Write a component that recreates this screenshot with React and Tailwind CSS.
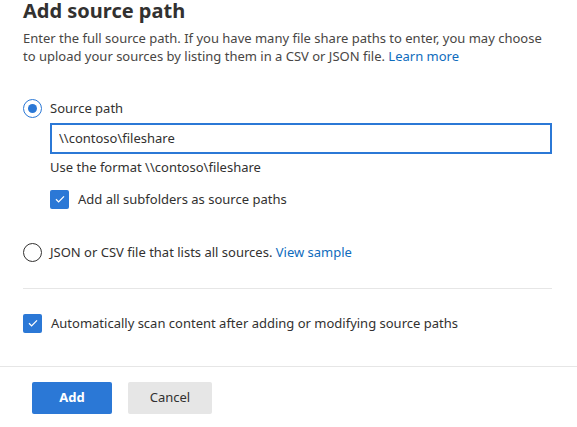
import React, { useState } from 'react';

const font = { fontFamily: '"Noto Sans", "Open Sans", sans-serif' };

const CheckBox = ({ checked, onChange }) => (
  <button
    type="button"
    onClick={onChange}
    className={`w-[19px] h-[19px] rounded-[2px] flex items-center justify-center shrink-0 ${
      checked ? 'bg-[#2b78d6]' : 'border border-[#323130] bg-white'
    }`}
  >
    {checked && (
      <svg width="12" height="12" viewBox="0 0 12 12" fill="none">
        <path d="M2 6.3l2.6 2.6L10 3.4" stroke="white" strokeWidth="1.3" />
      </svg>
    )}
  </button>
);

const Radio = ({ checked, onChange }) => (
  <button
    type="button"
    onClick={onChange}
    className={`w-[19px] h-[19px] rounded-full border-[1.5px] flex items-center justify-center shrink-0 bg-white ${
      checked ? 'border-[#2b78d6]' : 'border-[#323130]'
    }`}
  >
    {checked && <span className="w-[9px] h-[9px] rounded-full bg-[#2b78d6]" />}
  </button>
);

export default function App() {
  const [mode, setMode] = useState('path');
  const [path, setPath] = useState('\\\\contoso\\fileshare');
  const [subfolders, setSubfolders] = useState(true);
  const [autoScan, setAutoScan] = useState(true);

  return (
    <div className="w-[577px] h-[427px] bg-white text-[#323130] overflow-hidden" style={font}>
      {/* Body */}
      <div className="pl-[23px] pr-[25px]">
        <h2 className="text-[20px] font-bold leading-[22px]">Add source path</h2>
        <p className="text-[13px] leading-[18px] mt-[7px] text-[#484644]">
          Enter the full source path. If you have many file share paths to enter, you may choose
          to upload your sources by listing them in a CSV or JSON file.{' '}
          <a className="text-[#0f6cbd]">Learn more</a>
        </p>

        {/* Source path option */}
        <div className="mt-[34px]">
          <label className="flex items-center gap-[8px] text-[13px]">
            <Radio checked={mode === 'path'} onChange={() => setMode('path')} />
            <span>Source path</span>
          </label>
          <div className="pl-[27px] mt-[4px]">
            <input
              autoFocus
              value={path}
              onChange={(e) => setPath(e.target.value)}
              className="w-full h-[31px] border-2 border-[#2b78d6] px-[7px] text-[13px] outline-none"
              style={font}
            />
            <p className="text-[13px] mt-[4px] leading-[18px]">Use the format \\contoso\fileshare</p>
            <label className="flex items-center gap-[9px] text-[13px] mt-[14px]">
              <CheckBox checked={subfolders} onChange={() => setSubfolders(!subfolders)} />
              <span>Add all subfolders as source paths</span>
            </label>
          </div>
        </div>

        {/* File option */}
        <label className="flex items-center gap-[8px] text-[13px] mt-[34px]">
          <Radio checked={mode === 'file'} onChange={() => setMode('file')} />
          <span>
            JSON or CSV file that lists all sources. <a className="text-[#0f6cbd]">View sample</a>
          </span>
        </label>

        <div className="border-t border-[#e6e6e6] mt-[25px]" />

        <label className="flex items-center gap-[9px] text-[13px] mt-[25px]">
          <CheckBox checked={autoScan} onChange={() => setAutoScan(!autoScan)} />
          <span>Automatically scan content after adding or modifying source paths</span>
        </label>
      </div>

      {/* Footer */}
      <div className="border-t border-[#e6e6e6] mt-[33px] px-[32px] pt-[15px] flex gap-[16px]">
        <button className="w-[80px] h-[32px] rounded-[2px] bg-[#2b78d6] text-white text-[13px] font-bold">
          Add
        </button>
        <button className="w-[84px] h-[32px] rounded-[2px] bg-[#e6e6e6] text-[#323130] text-[13px]">
          Cancel
        </button>
      </div>
    </div>
  );
}
